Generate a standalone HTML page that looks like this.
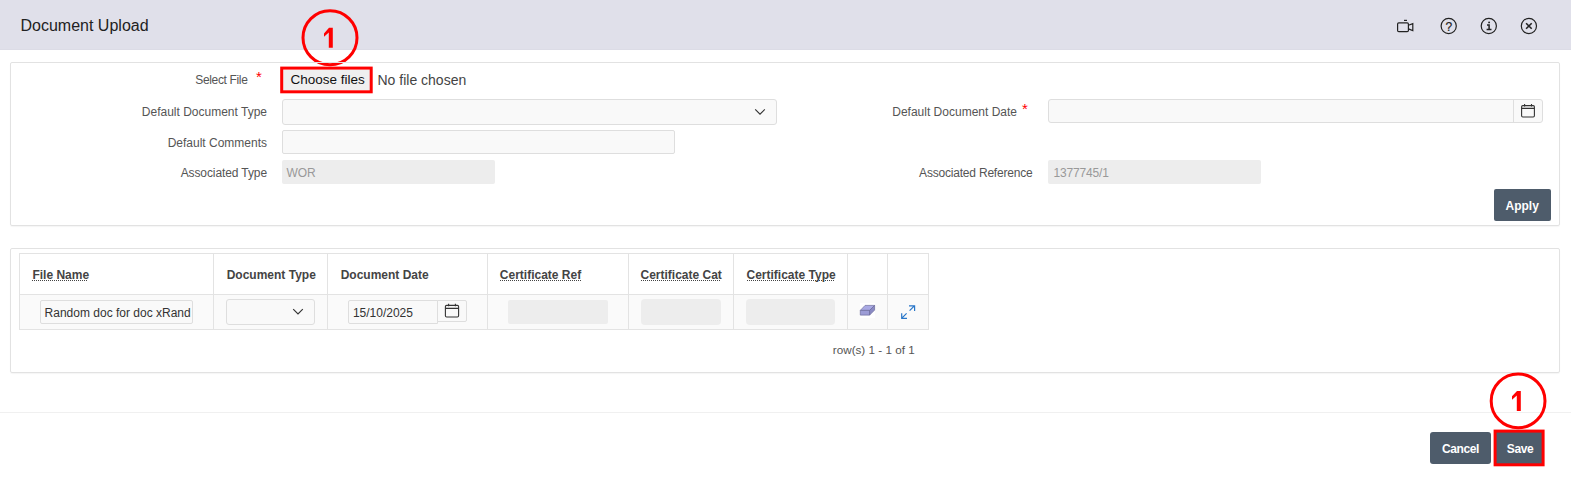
<!DOCTYPE html>
<html><head><meta charset="utf-8">
<style>
html,body{margin:0;padding:0;}
body{width:1571px;height:488px;overflow:hidden;background:#fff;position:relative;font-family:"Liberation Sans",sans-serif;}
.a{position:absolute;}
.t{position:absolute;white-space:pre;line-height:1;}
.lbl{position:absolute;left:0;text-align:right;white-space:pre;line-height:1;font-size:12px;color:#555;}
.inp{position:absolute;box-sizing:border-box;border:1px solid #dedede;background:#f9f9f9;}
.dis{position:absolute;box-sizing:border-box;background:#ededed;border-radius:2px;}
.btn{position:absolute;box-sizing:border-box;background:#4e5c6b;border-radius:3px;}
.th{position:absolute;white-space:pre;line-height:1;font-size:12px;font-weight:bold;color:#444;}
.dot{}
.dl{position:absolute;top:280px;height:1px;background-image:linear-gradient(to right,#444 50%,transparent 50%);background-size:2px 1px;}
.red{position:absolute;box-sizing:border-box;border:3px solid #ff0000;}
</style></head><body>

<!-- header -->
<div class="a" style="left:0;top:0;width:1571px;height:50px;background:#e0e0ea;"></div>
<div class="a" style="left:0;top:49px;width:1571px;height:1px;background:#dcdce6;"></div>
<div class="t" style="left:20.5px;top:18px;font-size:16px;color:#222;">Document Upload</div>

<!-- header icons -->
<svg class="a" style="left:1390px;top:14px" width="160" height="24" viewBox="1390 14 160 24">
  <g fill="none" stroke="#222" stroke-width="1.2">
    <rect x="1397.6" y="22.8" width="10.8" height="8.8" rx="1.2"/>
    <path d="M1408.4 25.3 L1412.8 23.6 L1412.8 30.6 L1408.4 28.9"/>
    <path d="M1404 20.4 H1407"/>
    <circle cx="1448.7" cy="26" r="7.6"/>
    <circle cx="1488.8" cy="26" r="7.6"/>
    <circle cx="1528.9" cy="26" r="7.6"/>
    <path d="M1526.1 23.2 L1531.7 28.8 M1531.7 23.2 L1526.1 28.8" stroke-width="1.6"/>
  </g>
  <text x="1448.9" y="30.5" font-family="Liberation Sans" font-size="12" text-anchor="middle" fill="#222" stroke="#222" stroke-width="0.2">?</text>
  <circle cx="1489.1" cy="22.4" r="0.95" fill="#222"/><path d="M1487 24.9 H1489.1 V29.6 M1486.6 29.6 H1491.5" fill="none" stroke="#222" stroke-width="1.5"/>
</svg>

<!-- annotation circle 1 -->
<svg class="a" style="left:290px;top:0px" width="80" height="80" viewBox="290 0 80 80">
  <circle cx="330" cy="37.75" r="27" fill="none" stroke="#ff0000" stroke-width="3"/>
  <path d="M324 33.4 L329 27.8 H332.8 V47.8 H328.8 V32.4 L324 36.8 Z" fill="#ff0000"/>
</svg>

<!-- panel 1 -->
<div class="a" style="left:10px;top:62px;width:1550px;height:164px;box-sizing:border-box;border:1px solid #e2e2e2;border-radius:2px;box-shadow:0 1px 1px rgba(0,0,0,0.04);"></div>

<div class="lbl" style="width:247.5px;top:74px;letter-spacing:-0.35px;">Select File</div>
<div class="t" style="left:256px;top:68.7px;font-size:15px;color:#ff0000;">*</div>

<div class="a" style="left:283px;top:70px;width:87px;height:20px;background:#efefef;"></div>
<svg class="a" style="left:270px;top:60px" width="115" height="40" viewBox="270 60 115 40"><rect x="281.7" y="68.1" width="89.5" height="23.7" fill="none" stroke="#ff0000" stroke-width="3"/></svg>
<div class="t" style="left:290.5px;top:73.3px;font-size:13.5px;color:#111;">Choose files</div>
<div class="t" style="left:377.5px;top:73.2px;font-size:14px;color:#444;">No file chosen</div>

<div class="lbl" style="width:267px;top:106px;">Default Document Type</div>
<div class="inp" style="left:282px;top:99px;width:495px;height:26px;border-radius:3px;"></div>
<svg class="a" style="left:750px;top:104px" width="20" height="16" viewBox="750 104 20 16"><path d="M755.2 109.4 L760 114.2 L764.8 109.4" fill="none" stroke="#333" stroke-width="1.15"/></svg>

<div class="lbl" style="width:267px;top:137px;">Default Comments</div>
<div class="inp" style="left:282px;top:130px;width:393px;height:24px;border-radius:2px;"></div>

<div class="lbl" style="width:267px;top:167px;letter-spacing:-0.1px;">Associated Type</div>
<div class="dis" style="left:282px;top:160px;width:213px;height:24px;"></div>
<div class="t" style="left:286.4px;top:167px;font-size:12px;color:#999;">WOR</div>

<div class="lbl" style="width:1017px;top:106px;">Default Document Date</div>
<div class="t" style="left:1022px;top:100.9px;font-size:15px;color:#ff0000;">*</div>
<div class="inp" style="left:1048px;top:99px;width:495px;height:24px;border-radius:3px;"></div>
<div class="a" style="left:1513px;top:100px;width:1px;height:22px;background:#dedede;"></div>
<svg class="a" style="left:1515px;top:100px" width="26" height="22" viewBox="1515 100 26 22">
  <g fill="none" stroke="#333" stroke-width="1.1">
    <rect x="1521.6" y="105.6" width="12.8" height="11.4" rx="1.2"/>
    <path d="M1521.6 108.4 H1534.4 M1524.6 104 V106.4 M1531.5 104 V106.4"/>
  </g>
</svg>

<div class="lbl" style="width:1032.5px;top:167px;letter-spacing:-0.2px;">Associated Reference</div>
<div class="dis" style="left:1048px;top:160px;width:213px;height:24px;"></div>
<div class="t" style="left:1053.4px;top:167px;font-size:12px;color:#999;letter-spacing:-0.15px;">1377745/1</div>

<div class="btn" style="left:1494px;top:189px;width:57px;height:32px;border-radius:2px;"></div>
<div class="t" style="left:1505.5px;top:199.6px;font-size:12px;font-weight:bold;color:#fff;">Apply</div>

<!-- panel 2 -->
<div class="a" style="left:10px;top:248px;width:1550px;height:125px;box-sizing:border-box;border:1px solid #e2e2e2;border-radius:2px;box-shadow:0 1px 1px rgba(0,0,0,0.04);"></div>

<!-- table -->
<div class="a" style="left:19px;top:294px;width:910px;height:35px;background:#fafafa;"></div>
<div class="a" style="left:19px;top:253px;width:910px;height:77px;box-sizing:border-box;border:1px solid #e3e3e3;"></div>
<div class="a" style="left:19px;top:294px;width:910px;height:1px;background:#e3e3e3;"></div>
<div class="a" style="left:213px;top:253px;width:1px;height:77px;background:#e3e3e3;"></div>
<div class="a" style="left:327px;top:253px;width:1px;height:77px;background:#e3e3e3;"></div>
<div class="a" style="left:487px;top:253px;width:1px;height:77px;background:#e3e3e3;"></div>
<div class="a" style="left:628px;top:253px;width:1px;height:77px;background:#e3e3e3;"></div>
<div class="a" style="left:733px;top:253px;width:1px;height:77px;background:#e3e3e3;"></div>
<div class="a" style="left:847px;top:253px;width:1px;height:77px;background:#e3e3e3;"></div>
<div class="a" style="left:887px;top:253px;width:1px;height:77px;background:#e3e3e3;"></div>

<div class="th" style="left:32.4px;top:268.5px;"><span class="dot">File Name</span></div>
<div class="dl" style="left:32px;width:56px;"></div>
<div class="dl" style="left:500px;width:81px;"></div>
<div class="dl" style="left:641px;width:80px;"></div>
<div class="dl" style="left:747px;width:88px;"></div>
<div class="th" style="left:226.7px;top:268.5px;">Document Type</div>
<div class="th" style="left:340.7px;top:268.5px;">Document Date</div>
<div class="th" style="left:499.8px;top:268.5px;"><span class="dot">Certificate Ref</span></div>
<div class="th" style="left:640.5px;top:268.5px;"><span class="dot">Certificate Cat</span></div>
<div class="th" style="left:746.5px;top:268.5px;"><span class="dot">Certificate Type</span></div>

<div class="inp" style="left:40px;top:300px;width:153px;height:24px;border-radius:2px;overflow:hidden;">
  <div class="t" style="left:3.6px;top:5.8px;font-size:12px;color:#333;">Random doc for doc xRand</div>
</div>

<div class="inp" style="left:226px;top:299px;width:89px;height:26px;border-radius:3px;"></div>
<svg class="a" style="left:288px;top:304px" width="20" height="14" viewBox="288 304 20 14"><path d="M293.2 309.2 L298 314 L302.8 309.2" fill="none" stroke="#333" stroke-width="1.15"/></svg>

<div class="inp" style="left:348px;top:300px;width:90px;height:24px;border-radius:2px 0 0 2px;"></div>
<div class="t" style="left:352.9px;top:306.5px;font-size:12px;color:#333;">15/10/2025</div>
<div class="inp" style="left:437px;top:300px;width:30px;height:22px;border-radius:0 2px 2px 0;"></div>
<svg class="a" style="left:440px;top:300px" width="26" height="22" viewBox="440 300 26 22">
  <g fill="none" stroke="#333" stroke-width="1.1">
    <rect x="445.4" y="305.4" width="13.2" height="11.6" rx="1.2"/>
    <path d="M445.4 308.4 H458.6 M448.6 303.8 V306.2 M455.4 303.8 V306.2"/>
  </g>
</svg>

<div class="dis" style="left:508px;top:300px;width:100px;height:24px;"></div>
<div class="dis" style="left:641px;top:299px;width:80px;height:26px;border-radius:4px;"></div>
<div class="dis" style="left:746px;top:299px;width:89px;height:26px;border-radius:4px;"></div>

<!-- eraser -->
<div class="a" style="left:860px;top:303px;width:15px;height:15px;background:#fff;"></div>
<svg class="a" style="left:855px;top:300px" width="26" height="20" viewBox="855 300 26 20">
  <g stroke="#6c6c9c" stroke-width="0.7" stroke-linejoin="round">
  <path d="M860.3 310.4 L865.1 305.4 L874.6 305.4 L869.6 310.4 Z" fill="#a9a9e4"/>
  <path d="M860.3 310.4 H869.6 V315.1 H860.3 Z" fill="#9c9cd6"/>
  <path d="M869.6 310.4 L874.6 305.4 V310.1 L869.6 315.1 Z" fill="#8a8ac4"/>
  </g>
</svg>
<!-- expand -->
<svg class="a" style="left:896px;top:300px" width="24" height="22" viewBox="896 300 24 22">
  <g fill="none" stroke="#2a77c9" stroke-width="1.2">
    <path d="M909.6 310.6 L914.6 305.6 M909 305.9 H914.6 V311"/>
    <path d="M906.6 313.4 L901.6 318.4 M901.7 313.2 V318.4 H907"/>
  </g>
</svg>

<div class="t" style="left:832.8px;top:343.8px;font-size:11.7px;color:#555;">row(s) 1 - 1 of 1</div>

<!-- footer -->
<div class="a" style="left:0;top:412px;width:1571px;height:1px;background:#f0f0f0;"></div>
<div class="btn" style="left:1430px;top:432px;width:61px;height:32px;"></div>
<div class="t" style="left:1442px;top:442.7px;font-size:12px;font-weight:bold;color:#fff;letter-spacing:-0.4px;">Cancel</div>
<div class="btn" style="left:1495px;top:431px;width:48px;height:34px;border-radius:0;"></div>
<svg class="a" style="left:1485px;top:420px" width="70" height="55" viewBox="1485 420 70 55"><rect x="1495.1" y="431.1" width="48" height="33.7" fill="none" stroke="#ff0000" stroke-width="3"/></svg>
<div class="t" style="left:1506.8px;top:442.7px;font-size:12px;font-weight:bold;color:#fff;letter-spacing:-0.4px;">Save</div>

<!-- annotation circle 2 -->
<svg class="a" style="left:1478px;top:362px" width="80" height="80" viewBox="1478 362 80 80">
  <circle cx="1518.1" cy="400.9" r="26.9" fill="none" stroke="#ff0000" stroke-width="3"/>
  <path d="M1512 396.3 L1517 390.9 H1520.8 V410.9 H1516.8 V395.5 L1512 399.8 Z" fill="#ff0000"/>
</svg>

</body></html>
